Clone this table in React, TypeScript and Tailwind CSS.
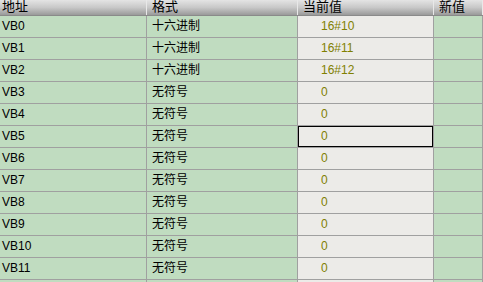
import React from "react";

const rows = [
  { addr: "VB0", fmt: "十六进制", cur: "16#10" },
  { addr: "VB1", fmt: "十六进制", cur: "16#11" },
  { addr: "VB2", fmt: "十六进制", cur: "16#12" },
  { addr: "VB3", fmt: "无符号", cur: "0" },
  { addr: "VB4", fmt: "无符号", cur: "0" },
  { addr: "VB5", fmt: "无符号", cur: "0", focus: true },
  { addr: "VB6", fmt: "无符号", cur: "0" },
  { addr: "VB7", fmt: "无符号", cur: "0" },
  { addr: "VB8", fmt: "无符号", cur: "0" },
  { addr: "VB9", fmt: "无符号", cur: "0" },
  { addr: "VB10", fmt: "无符号", cur: "0" },
  { addr: "VB11", fmt: "无符号", cur: "0" },
  { addr: "", fmt: "", cur: "" },
];

const cols = "grid grid-cols-[147px_151px_136px_1fr]";

export default function App() {
  return (
    <div
      className="w-[483px] h-[282px] overflow-hidden bg-[#c0dcc0] text-[12px] text-black"
      style={{ fontFamily: '"Liberation Sans", "Noto Sans CJK SC", sans-serif' }}
    >
      <div className={`${cols} h-[16px] border-b border-[#8a8a8a] bg-gradient-to-b from-[#e4e4e4] via-[#c8c8c8] to-[#9a9a9a]`}>
        {["地址", "格式", "当前值", "新值"].map((h, i) => (
          <div
            key={h}
            className={`border-r border-[#e8e8e8] leading-[13px] text-[13px] ${i === 0 ? "pl-[2px]" : "pl-[5px]"}`}
          >
            {h}
          </div>
        ))}
      </div>
      {rows.map((r, i) => (
        <div key={i} className={`${cols} h-[22px] border-b border-[#a0a0a0]`}>
          <div className="border-r border-[#a0a0a0] pl-[2px] leading-[21px]">{r.addr}</div>
          <div className="border-r border-[#a0a0a0] pl-[5px] leading-[21px]">{r.fmt}</div>
          <div className="relative border-r border-[#a0a0a0] bg-[#ecebe8] pl-[23px] leading-[21px] text-[#808000]">
            {r.cur}
            {r.focus && <div className="absolute inset-0 border border-black" />}
          </div>
          <div className="border-r border-[#a0a0a0]" />
        </div>
      ))}
    </div>
  );
}
